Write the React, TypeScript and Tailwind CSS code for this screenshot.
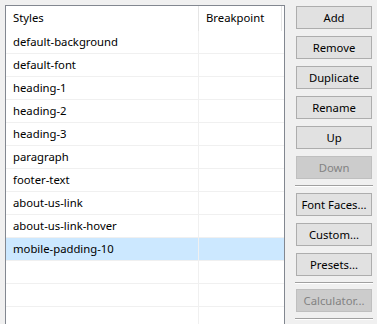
import React from 'react'

const styles = [
  'default-background',
  'default-font',
  'heading-1',
  'heading-2',
  'heading-3',
  'paragraph',
  'footer-text',
  'about-us-link',
  'about-us-link-hover',
  'mobile-padding-10',
  '',
  '',
  '',
]

const Btn: React.FC<{ label: string; disabled?: boolean; className?: string }> = ({ label, disabled, className }) => (
  <button
    className={`h-[23px] w-[76px] border text-[11.3px] leading-none ${
      disabled ? 'bg-[#cccccc] border-[#bfbfbf] text-[#838383]' : 'bg-[#e1e1e1] border-[#adadad] text-black'
    } ${className ?? ''}`}
  >
    {label}
  </button>
)

const Sep: React.FC<{ className?: string }> = ({ className }) => (
  <div className={`w-[78px] -ml-px border-t border-[#a0a0a0] border-b border-b-white ${className ?? ''}`} />
)

export default function App() {
  return (
    <div
      className="w-[377px] h-[324px] overflow-hidden bg-[#f0f0f0] flex pl-[5px] pt-[5px]"
      style={{ fontFamily: '"Noto Sans", "Open Sans", sans-serif' }}
    >
      <div className="w-[280px] h-[340px] bg-white border border-[#828790] shrink-0">
        <div className="flex h-[25px] text-[11.3px] text-black">
          <div className="w-[193px] pl-[7px] flex items-center border-r border-[#e5e5e5]">Styles</div>
          <div className="w-[83px] pl-[7px] flex items-center border-r border-[#e5e5e5]">Breakpoint</div>
        </div>
        {styles.map((s, i) => (
          <div
            key={i}
            className={`flex h-[23px] border-b border-[#f0f0f0] text-[11.3px] text-black ${
              s === 'mobile-padding-10' ? 'bg-[#cce8ff]' : ''
            }`}
          >
            <div className="w-[193px] pl-[7px] pt-px flex items-center border-r border-[#f0f0f0]">{s}</div>
            <div className="flex-1" />
          </div>
        ))}
      </div>
      <div className="ml-[11px] pt-px flex flex-col">
        <Btn label="Add" />
        <Btn label="Remove" className="mt-[7px]" />
        <Btn label="Duplicate" className="mt-[7px]" />
        <Btn label="Rename" className="mt-[7px]" />
        <Btn label="Up" className="mt-[7px]" />
        <Btn label="Down" disabled className="mt-[7px]" />
        <Sep className="mt-[6px]" />
        <Btn label="Font Faces..." className="mt-[6px]" />
        <Btn label="Custom..." className="mt-[7px]" />
        <Btn label="Presets..." className="mt-[7px]" />
        <Sep className="mt-[6px]" />
        <Btn label="Calculator..." disabled className="mt-[5px]" />
        <Sep className="mt-[6px]" />
      </div>
    </div>
  )
}
